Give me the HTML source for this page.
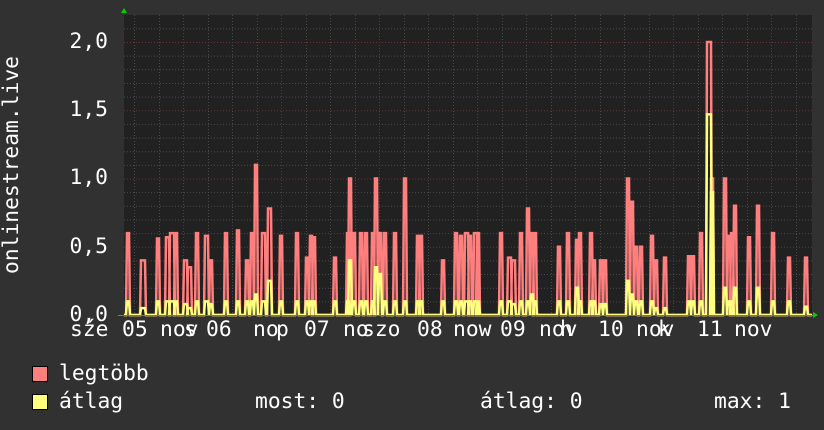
<!DOCTYPE html>
<html><head><meta charset="utf-8"><style>
body{margin:0;background:#313131;width:824px;height:430px;overflow:hidden;position:relative;font-family:"DejaVu Sans Mono","Liberation Mono",monospace;color:#fff;font-size:21.3px}
.t{position:absolute;white-space:pre;line-height:20px}
.r{text-align:right;width:60px}
</style></head><body>
<svg width="824" height="430" style="position:absolute;left:0;top:0" id="g">
<rect x="124" y="15" width="688" height="300" fill="#212121"/>
<g id="grid"></g>
<g id="data"></g>
<line x1="118" y1="315.5" x2="814" y2="315.5" stroke="#777" stroke-width="1"/>
<polygon points="121,13 127,13 124,8" fill="#00d000"/>
<polygon points="813,312 813,318 818,315" fill="#00d000"/>
</svg>
<div class="t r" style="left:48px;top:32px">2,0</div>
<div class="t r" style="left:48px;top:100px">1,5</div>
<div class="t r" style="left:48px;top:168px">1,0</div>
<div class="t r" style="left:48px;top:237px">0,5</div>
<div class="t r" style="left:48px;top:305px">0,0</div>
<div class="t" style="left:-98px;top:155px;transform:rotate(-90deg);width:220px;text-align:center">onlinestream.live</div>
<div class="t" style="left:70px;top:320px">sźe</div>
<div class="t" style="left:122px;top:320px">05</div>
<div class="t" style="left:160px;top:320px">nov</div>
<div class="t" style="left:184px;top:320px">s</div>
<div class="t" style="left:206px;top:320px">06</div>
<div class="t" style="left:253px;top:320px">no</div>
<div class="t" style="left:276px;top:320px">p</div>
<div class="t" style="left:304px;top:320px">07</div>
<div class="t" style="left:343px;top:320px">no</div>
<div class="t" style="left:362px;top:320px">szo</div>
<div class="t" style="left:417px;top:320px">08</div>
<div class="t" style="left:453px;top:320px">now</div>
<div class="t" style="left:500px;top:320px">09</div>
<div class="t" style="left:539px;top:320px">nov</div>
<div class="t" style="left:560px;top:320px">h</div>
<div class="t" style="left:598px;top:320px">10</div>
<div class="t" style="left:636px;top:320px">nov</div>
<div class="t" style="left:658px;top:320px">k</div>
<div class="t" style="left:697px;top:320px">11</div>
<div class="t" style="left:734px;top:320px">nov</div>
<div style="position:absolute;left:32px;top:366px;width:14px;height:14px;background:#ff7f7f;border:1px solid #000"></div>
<div style="position:absolute;left:32px;top:394px;width:14px;height:14px;background:#ffff7f;border:1px solid #000"></div>
<div class="t" style="left:59px;top:364px">legtöbb</div>
<div class="t" style="left:59px;top:392px">átlag</div>
<div class="t" style="left:255px;top:392px">most: 0</div>
<div class="t" style="left:480px;top:392px">átlag: 0</div>
<div class="t" style="left:714px;top:392px">max: 1</div>
<script>
function Y(v){return 315-v*136.5;}
var g=document.getElementById("grid"),s="";
for(var i=1;i<=21;i++){var y=Y(i*0.1)+0.5;var maj=(i%5==0);
s+='<line x1="124" x2="812" y1="'+y+'" y2="'+y+'" stroke="'+(maj?'#6a3434':'#4a4a4a')+'" stroke-dasharray="1,2"/>';}
for(var x=134;x<812;x+=24.5){var xx=Math.round(x)+0.5;var maj=Math.abs(((x-183)%98+98)%98)<1;
s+='<line y1="15" y2="315" x1="'+xx+'" x2="'+xx+'" stroke="'+(maj?'#6a3434':'#4a4a4a')+'" stroke-dasharray="1,2"/>';}
g.innerHTML=s;
var sp=[[127,.6,.1,2],[141,.4,.05,4],[157,.56,.1,2],[166,.57,.1,3],[170,.6,.1,4],[175,.6,.1,2],[184,.4,.08,3],[188,.35,.05,3],[196,.6,.1,2],[205,.58,.1,3],[210,.4,.08,2],[225,.6,.1,2],[237,.62,.1,2],[246,.4,.1,2],[251,.6,.1,2],[255,1.1,.15,2],[262,.6,.1,3],[268,.78,.25,3],[280,.58,.1,2],[296,.6,.1,2],[306,.42,.1,2],[310,.58,.1,2],[313,.57,.1,2],[334,.42,.1,2],[347,.6,.1,2],[349,1.0,.4,2],[353,.6,.1,2],[360,.6,.1,2],[365,.6,.1,2],[372,.6,.1,2],[375,1.0,.35,2],[379,.6,.3,2],[384,.6,.1,2],[394,.6,.1,2],[404,1.0,.1,2],[417,.58,.1,2],[420,.58,.1,2],[442,.4,.1,2],[455,.6,.1,2],[460,.58,.1,2],[465,.6,.1,3],[469,.58,.1,2],[474,.6,.1,3],[477,.6,.1,2],[500,.6,.1,2],[508,.42,.1,3],[512,.4,.08,3],[520,.6,.1,2],[527,.78,.1,2],[531,.6,.15,2],[534,.6,.1,2],[558,.5,.1,2],[567,.6,.1,2],[576,.55,.2,2],[579,.6,.1,2],[590,.6,.1,2],[593,.4,.1,2],[600,.4,.08,2],[604,.4,.08,2],[627,1.0,.25,2],[631,.83,.15,2],[635,.5,.1,2],[640,.5,.1,2],[651,.58,.1,2],[655,.4,.05,2],[664,.42,.05,2],[688,.43,.1,2],[692,.43,.1,2],[700,.6,.1,2],[707,2.0,1.47,4],[711,1.0,.9,2],[724,1.0,.2,2],[728,.58,.1,2],[731,.6,.1,2],[734,.8,.2,2],[748,.57,.1,2],[757,.8,.2,2],[772,.6,.1,2],[788,.42,.1,2],[805,.42,.06,2]];
function path(idx){var d="M124,"+Y(0);sp.forEach(function(p){var v=p[idx];d+=" L"+(p[0]-1)+","+Y(0)+" L"+p[0]+","+Y(v)+" L"+(p[0]+p[3])+","+Y(v)+" L"+(p[0]+p[3]+1)+","+Y(0);});d+=" L812,"+Y(0);return d;}
document.getElementById("data").innerHTML='<path d="'+path(1)+'" fill="none" stroke="#ff7f7f" stroke-width="2.5"/><path d="'+path(2)+'" fill="none" stroke="#ffff7f" stroke-width="2.5"/>';
</script>
</body></html>
